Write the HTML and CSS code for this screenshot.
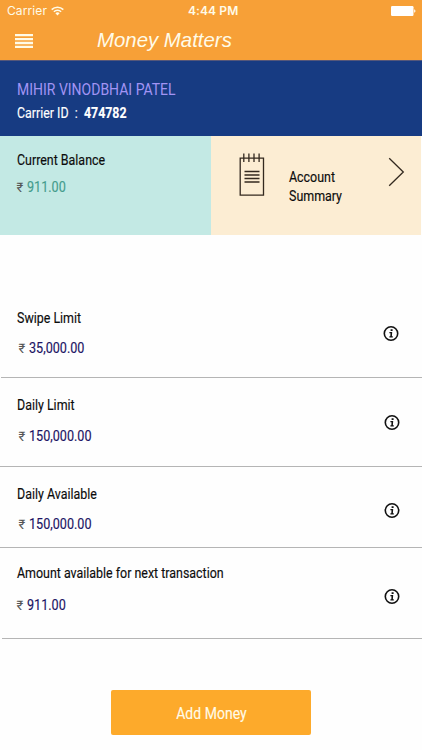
FILE: index.html
```html
<!DOCTYPE html>
<html lang="en">
<head>
<meta charset="utf-8">
<title>Money Matters</title>
<link rel="stylesheet" href="styles.css">
</head>
<body>
<svg class="defs" width="0" height="0" aria-hidden="true">
  <symbol id="info" viewBox="0 0 16 16">
    <circle cx="8" cy="7.5" r="6.7" fill="none" stroke="#111" stroke-width="1.6"/>
    <path d="M7.6 3.3h2v1.8h-2zM6.4 6.1h2.8l-.3 4.1h.9v1.2H6.4v-1.2h.9l.2-2.9H6.4z" fill="#111"/>
  </symbol>
</svg>
<header class="top">
  <div class="status">
    <span class="carrier">Carrier</span>
    <svg class="wifi" width="13" height="10" viewBox="0 0 13 10"><g fill="none" stroke="#fffbe8" stroke-width="1.6"><path d="M.7 3.6a8.2 8.2 0 0 1 11.6 0"/><path d="M2.9 5.8a5.1 5.1 0 0 1 7.2 0"/></g><path d="M4.4 7.3a2.9 2.9 0 0 1 4.2 0L6.5 9.4z" fill="#fffbe8"/></svg>
    <span class="time">4:44 PM</span>
    <svg class="battery" width="25" height="10" viewBox="0 0 25 10"><rect width="22.5" height="10" rx="1.2" fill="#fff"/><path d="M23.2 3.2c1.7.6 1.7 3 0 3.6z" fill="#fff"/></svg>
  </div>
  <div class="nav">
    <svg class="menu" width="18" height="14" viewBox="0 0 18 14"><path d="M0 1.2h18M0 5.1h18M0 9h18M0 12.9h18" stroke="#fffbe8" stroke-width="2.3"/></svg>
    <h1 class="title">Money Matters</h1>
  </div>
</header>
<section class="profile">
  <div class="name"><span class="cond">MIHIR VINODBHAI PATEL</span></div>
  <div class="cid"><span class="cond">Carrier ID&nbsp; :&nbsp; <b>474782</b></span></div>
</section>
<section class="cards">
  <div class="balance">
    <div class="label"><span class="cond">Current Balance</span></div>
    <div class="value"><span class="rupee">₹</span><span class="cond">911.00</span></div>
  </div>
  <div class="summary">
    <svg class="note" width="26" height="44" viewBox="0 0 26 44"><g fill="none" stroke="#33291f" stroke-width="1.3"><path d="M1.2 5.2h23.3v37H1.2zM4.8.5v8.6M9.9.5v8.6M15 .5v8.6M20.1.5v8.6"/><path d="M5.5 18.5h15M5.5 22h15M5.5 25.5h15M5.5 29h15" stroke-width="1.6"/></g></svg>
    <div class="account"><span class="cond">Account<br>Summary</span></div>
    <svg class="chevron" width="17" height="30" viewBox="0 0 17 30"><path d="M1.2 1.3 15.3 15 1.2 28.7" fill="none" stroke="#33291f" stroke-width="1.3"/></svg>
  </div>
</section>
<main class="limits">
  <div class="row swipe">
    <div class="label"><span class="cond">Swipe Limit</span></div>
    <div class="value"><span class="rupee">₹</span><span class="cond">35,000.00</span></div>
    <svg class="info"><use href="#info"/></svg>
  </div>
  <div class="row daily">
    <div class="label"><span class="cond">Daily Limit</span></div>
    <div class="value"><span class="rupee">₹</span><span class="cond">150,000.00</span></div>
    <svg class="info"><use href="#info"/></svg>
  </div>
  <div class="row available">
    <div class="label"><span class="cond">Daily Available</span></div>
    <div class="value"><span class="rupee">₹</span><span class="cond">150,000.00</span></div>
    <svg class="info"><use href="#info"/></svg>
  </div>
  <div class="row next">
    <div class="label"><span class="cond">Amount available for next transaction</span></div>
    <div class="value"><span class="rupee">₹</span><span class="cond">911.00</span></div>
    <svg class="info"><use href="#info"/></svg>
  </div>
</main>
<button class="add"><span class="cond">Add Money</span></button>
</body>
</html>
```
FILE: styles.css
```css
* { box-sizing: border-box; }
html { height: 750px; overflow: hidden; }
body { margin: 0; width: 422px; height: 750px; overflow: hidden; background: #fefefe; font-family: Roboto, "Liberation Sans", sans-serif; font-size: 14.5px; line-height: 20px; color: #0c0c0c; }
svg { display: block; flex: none; }
.defs { position: absolute; }
.cond { display: inline-block; white-space: nowrap; transform: scaleX(.857); transform-origin: 0 50%; -webkit-text-stroke: .15px currentColor; }
.top { height: 60px; background: #f7a037; color: #fffbe8; }
.status { height: 22px; display: grid; grid-template-columns: 44px 137px 1fr 25px; align-items: center; padding: 0 6px 0 7px; font: 12px/22px Inter, sans-serif; }
.carrier { letter-spacing: .1px; }
.time { font-weight: 600; letter-spacing: .1px; }
.nav { height: 38px; display: flex; align-items: center; padding-left: 15px; }
.title { margin: 0 0 2px 64px; font: italic 20.4px/30px "Liberation Sans", sans-serif; }
.menu { margin-top: -1px; }
.profile { height: 76px; background: #173b82; border-top: 1px solid #55577a; padding: 19px 0 0 17px; color: #fff; }
.name { font-size: 16.5px; color: #a294f4; }
.name .cond { transform: scaleX(.848); -webkit-text-stroke: 0; }
.cid { margin-top: 4px; }
.cid .cond { transform: scaleX(.855); }
.cards { height: 99px; display: grid; grid-template-columns: 211px 209.5px; }
.balance { background: #c3e9e4; padding: 15px 0 0 16.5px; }
.balance .value { margin-top: 6.5px; color: #449c8c; }
.value { display: flex; color: #1b1464; }
.value .cond { transform: scaleX(.87); }
.rupee { width: 10px; font-size: 13px; color: #555; }
.summary { background: #fcedd3; display: flex; padding-left: 28px; }
.note { margin-top: 17px; }
.account { width: 75px; margin: 32px 0 0 23.5px; line-height: 19px; }
.chevron { margin: 21px 0 0 24.5px; }
.limits { margin-top: 65px; }
.row { display: grid; grid-template-columns: 1fr 16px; column-gap: 10px; align-content: start; padding: 0 22px 0 16.5px; border-bottom: 1px solid #b5b5b5; }
.row .value { grid-column: 1; }
.info { width: 16px; height: 16px; grid-column: 2; grid-row: 1 / 3; }
.swipe { height: 78px; padding-top: 9px; row-gap: 10px; padding-right: 23px; margin-left: 1px; padding-left: 15.5px; }
.daily { height: 89px; padding-top: 18px; row-gap: 11px; }
.available { height: 81px; padding-top: 18px; row-gap: 10px; }
.next { height: 91px; padding-top: 16px; row-gap: 12px; margin-left: 2px; padding-left: 14.5px; }
.swipe .value, .daily .value, .available .value { padding-left: 2px; }
.swipe .info { margin-top: 17px; }
.daily .info { margin-top: 19px; }
.available .info { margin-top: 18px; }
.next .info { margin-top: 25px; }
.add { display: block; width: 200px; height: 45px; margin: 51px 0 0 111px; padding: 0; border: 0; border-radius: 2px; background: #fdaa2b; color: #fffbe8; font: 16.5px/47px Roboto, sans-serif; }
.add .cond { transform: scaleX(.85); transform-origin: 50% 50%; }
```
